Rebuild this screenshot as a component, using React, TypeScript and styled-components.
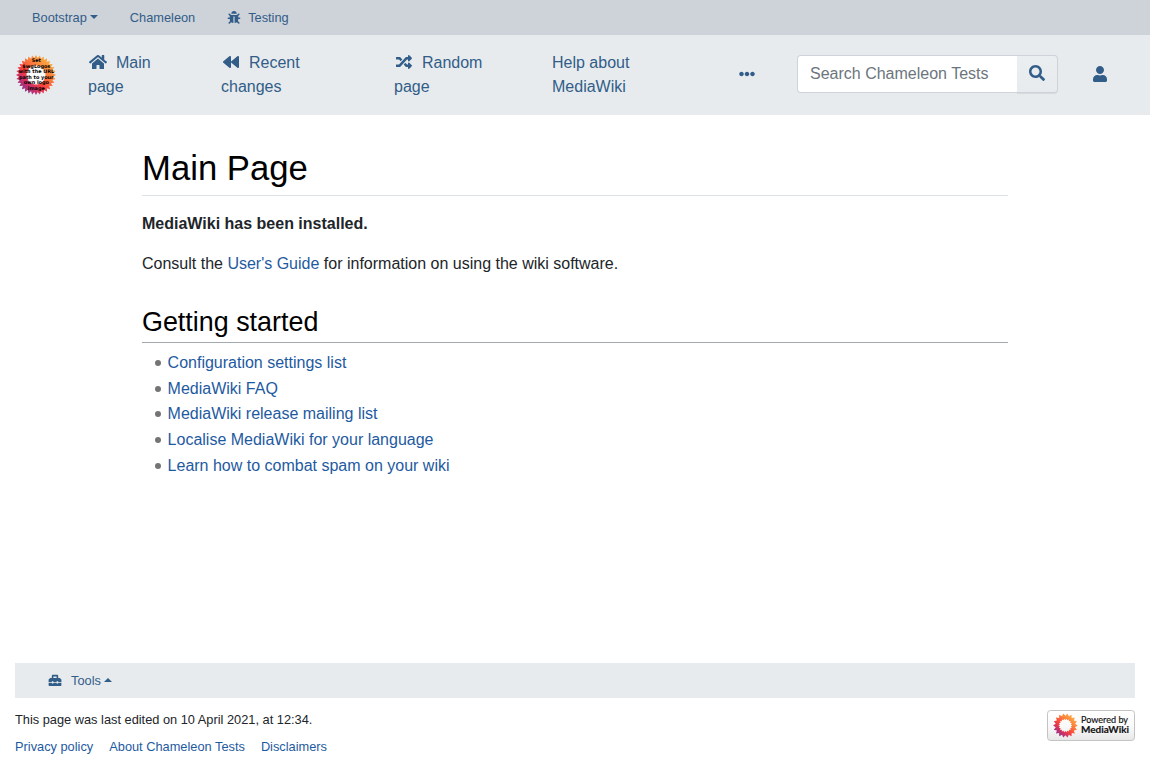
import React from "react";
import styled, { createGlobalStyle } from "styled-components";
import { FaBackward, FaBug, FaEllipsisH, FaHome, FaRandom, FaSearch, FaToolbox, FaUser } from "react-icons/fa";

const GlobalStyle = createGlobalStyle`
  *, *::before, *::after { box-sizing: border-box; }
  body {
    margin: 0;
    background: #fff;
    color: #212529;
    font: 16px/24px "Liberation Sans", Arial, sans-serif;
  }
  h1, h2, p, ul { margin: 0; padding: 0; font-weight: 400; }
  a { color: #1e5a9f; text-decoration: none; }
`;

const Page = styled.div`
  display: flex;
  flex-direction: column;
  height: 768px;
  overflow: hidden;
`;

const TopBar = styled.nav`
  display: flex;
  flex: none;
  height: 35px;
  padding-left: 32px;
  align-items: center;
  background: #ced2d9;
  font-size: 12.8px;
`;

const NavLink = styled.a<{ $gap?: number; $iconGap?: number }>`
  display: flex;
  align-items: center;
  color: #325d88;
  margin-right: ${(p) => p.$gap ?? 0}px;
  svg {
    width: 16px;
    height: 12.8px;
    margin-right: ${(p) => p.$iconGap ?? 0}px;
  }
`;

const Caret = styled.span<{ $up?: boolean }>`
  margin-left: 3px;
  margin-top: -1px;
  border: 0 solid transparent;
  border-width: ${(p) => (p.$up ? "0 4px 4px" : "4px 4px 0")};
  border-${(p) => (p.$up ? "bottom" : "top")}-color: currentColor;
`;

const MainNav = styled.nav`
  display: flex;
  flex: none;
  height: 80px;
  padding: 0 0 2px 16px;
  align-items: center;
  background: #e7ebee;
`;

const Brand = styled.a`
  width: 72px;
  height: 40px;
  margin-top: 2px;
`;

const NavItem = styled.a<{ $width: number }>`
  width: ${(p) => p.$width}px;
  flex: none;
  margin-top: 2px;
  color: #325d88;
  svg {
    width: 20px;
    height: 16px;
    margin-right: 3.5px;
    vertical-align: -2px;
  }
`;

const IconLink = styled.a<{ $width: number }>`
  display: flex;
  width: ${(p) => p.$width}px;
  flex: none;
  color: #325d88;
`;

const SearchGroup = styled.form`
  display: flex;
  width: 261px;
  height: 38px;
  margin-right: 34px;
`;

const SearchInput = styled.input`
  width: 220px;
  padding: 0 12px;
  border: 1px solid #ced2d9;
  border-right: 0;
  border-radius: 4px 0 0 4px;
  background: #fff;
  font: inherit;
  &::placeholder { color: #6c757d; opacity: 1; }
`;

const SearchButton = styled.button`
  display: flex;
  width: 41px;
  padding: 0 0 2px;
  align-items: center;
  justify-content: center;
  border: 1px solid #ced2d9;
  border-left: 0;
  border-radius: 0 4px 4px 0;
  background: linear-gradient(#ebeef1, #e7ebee);
  box-shadow: 0 1px 1px rgba(0, 0, 0, 0.075);
  color: #325d88;
`;

const Content = styled.main`
  width: 866px;
  margin: 0 auto;
  flex: 1;
`;

const PageTitle = styled.h1`
  height: 81px;
  padding-top: 32px;
  border-bottom: 1px solid #dee2e6;
  color: #000;
  font-size: 34.7px;
  line-height: 42px;
`;

const Paragraph = styled.p`
  margin-top: 16px;
`;

const SectionTitle = styled.h2`
  height: 37px;
  margin-top: 30px;
  border-bottom: 1px solid #a2a9b1;
  color: #000;
  font-size: 26.9px;
  line-height: 32px;
`;

const List = styled.ul`
  margin: 7px 0 0 12.8px;
  list-style: none;
`;

const ListItem = styled.li`
  display: flex;
  height: 25.7px;
  align-items: center;
  &::before {
    content: "";
    width: 6px;
    height: 6px;
    margin-right: 6.8px;
    border-radius: 50%;
    background: #747474;
  }
`;

const Footer = styled.footer`
  height: 105px;
  padding: 0 15px;
  font-size: 12.8px;
  line-height: 19.2px;
`;

const ToolBar = styled.div`
  display: flex;
  height: 35px;
  padding-left: 32px;
  align-items: center;
  background: #e7ebee;
`;

const FooterRow = styled.div`
  display: flex;
  justify-content: space-between;
  padding-top: 12px;
`;

const FooterLinks = styled.div`
  display: flex;
  gap: 16px;
  margin-top: 8px;
`;

const polar = (radius: number, angle: number) =>
  `${(Math.cos(angle) * radius).toFixed(2)},${(Math.sin(angle) * radius).toFixed(2)}`;

function ring(points: number, outer: number, valley: number, innerOut: number, innerIn: number) {
  const loop = (a: number, b: number) =>
    Array.from({ length: points * 2 }, (_, i) => polar(i % 2 ? b : a, (i * Math.PI) / points)).join("L");
  return `M${loop(outer, valley)}ZM${loop(innerOut, innerIn)}Z`;
}

function Sunflower({ id, d }: { id: string; d: string }) {
  return (
    <>
      <defs>
        <linearGradient id={id} x1="0.85" y1="0.1" x2="0.15" y2="0.9">
          <stop offset="0" stopColor="#fcb444" />
          <stop offset="0.35" stopColor="#fb7b3c" />
          <stop offset="0.6" stopColor="#f9403d" />
          <stop offset="0.8" stopColor="#c92f6a" />
          <stop offset="1" stopColor="#7b3a91" />
        </linearGradient>
      </defs>
      <path d={d} fill={`url(#${id})`} fillRule="evenodd" />
    </>
  );
}

const logoLines = ["Set", "$wgLogos", "with the URL", "path to your", "own logo", "image"];

function Logo() {
  return (
    <svg width="40" height="40" viewBox="-20 -20 40 40">
      <circle r="11" fill="#fff" opacity="0.85" />
      <Sunflower id="logo" d={ring(32, 20, 17, 10, 9)} />
      <g fontFamily="DejaVu Sans" fontWeight="700" fontSize="4.95" textAnchor="middle">
        {logoLines.map((line, i) => (
          <text key={line} x="0.3" y={-12.9 + i * 5.5}>{line}</text>
        ))}
      </g>
    </svg>
  );
}

function PoweredBy() {
  return (
    <svg width="88" height="31" viewBox="0 0 88 31">
      <defs>
        <linearGradient id="badge" x2="0" y2="1">
          <stop stopColor="#fff" />
          <stop offset="0.5" stopColor="#fafafa" />
          <stop offset="1" stopColor="#e7e7e7" />
        </linearGradient>
      </defs>
      <rect x="0.5" y="0.5" width="87" height="30" rx="3" fill="url(#badge)" stroke="#c3c3c3" />
      <g transform="translate(18.4 15.5)">
        <Sunflower id="flower" d={ring(18, 12.3, 9.8, 6.9, 5.5)} />
      </g>
      <g fill="#111" fontFamily="Lato, sans-serif">
        <text x="34" y="13" fontSize="8.8" textLength="47" lengthAdjust="spacingAndGlyphs" stroke="#111" strokeWidth="0.15">Powered by</text>
        <text x="34" y="22.8" fontSize="9.6" fontWeight="700" textLength="48" lengthAdjust="spacingAndGlyphs" stroke="#111" strokeWidth="0.15">MediaWiki</text>
      </g>
    </svg>
  );
}

const resources = [
  "Configuration settings list",
  "MediaWiki FAQ",
  "MediaWiki release mailing list",
  "Localise MediaWiki for your language",
  "Learn how to combat spam on your wiki",
];

export default function App() {
  return (
    <Page>
      <GlobalStyle />
      <TopBar>
        <NavLink $gap={32}>Bootstrap<Caret /></NavLink>
        <NavLink $gap={30.5}>Chameleon</NavLink>
        <NavLink $iconGap={6.4}><FaBug />Testing</NavLink>
      </TopBar>
      <MainNav>
        <Brand><Logo /></Brand>
        <NavItem $width={133}><FaHome /> Main<br />page</NavItem>
        <NavItem $width={173}><FaBackward /> Recent<br />changes</NavItem>
        <NavItem $width={158}><FaRandom /> Random<br />page</NavItem>
        <NavItem $width={187}>Help about<br />MediaWiki</NavItem>
        <IconLink $width={58}><FaEllipsisH size={16} /></IconLink>
        <SearchGroup>
          <SearchInput placeholder="Search Chameleon Tests" />
          <SearchButton type="button"><FaSearch size={16} /></SearchButton>
        </SearchGroup>
        <IconLink $width={20}><FaUser size={16} /></IconLink>
      </MainNav>
      <Content>
        <PageTitle>Main Page</PageTitle>
        <Paragraph><strong>MediaWiki has been installed.</strong></Paragraph>
        <Paragraph>Consult the <a href="#guide">User's Guide</a> for information on using the wiki software.</Paragraph>
        <SectionTitle>Getting started</SectionTitle>
        <List>
          {resources.map((name) => <ListItem key={name}><a href="#resource">{name}</a></ListItem>)}
        </List>
      </Content>
      <Footer>
        <ToolBar><NavLink $iconGap={8}><FaToolbox />Tools<Caret $up /></NavLink></ToolBar>
        <FooterRow>
          <div>
            <div>This page was last edited on 10 April 2021, at 12:34.</div>
            <FooterLinks>
              <a href="#privacy">Privacy policy</a>
              <a href="#about">About Chameleon Tests</a>
              <a href="#disclaimers">Disclaimers</a>
            </FooterLinks>
          </div>
          <PoweredBy />
        </FooterRow>
      </Footer>
    </Page>
  );
}
